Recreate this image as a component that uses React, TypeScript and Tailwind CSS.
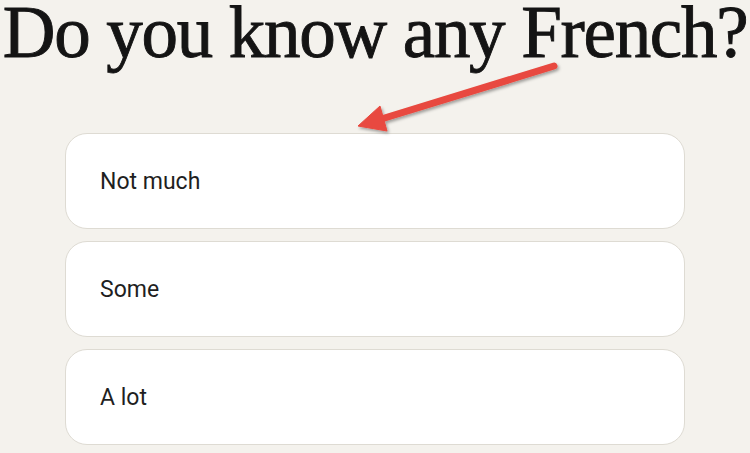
import React from 'react';

const options = ['Not much', 'Some', 'A lot'];

const App: React.FC = () => {
  return (
    <div className="relative h-[453px] w-[750px] overflow-hidden bg-[#f4f2ed]">
      {/* Question */}
      <h1 className="whitespace-nowrap text-center font-['Liberation_Serif',serif] text-[73px] leading-[66px] tracking-[-1.3px] text-[#141414] [-webkit-text-stroke:0.9px_#141414]">
        Do you know any French?
      </h1>

      {/* Answers */}
      <div className="mx-auto mt-[67px] flex w-[620px] flex-col gap-[12px]">
        {options.map((o) => (
          <button
            key={o}
            className="flex h-[96px] items-center rounded-[22px] border border-[#dedbd3] bg-white pl-[34px] pt-[3px] text-left font-['Roboto',sans-serif] text-[23px] text-[#1f1f1f]"
          >
            {o}
          </button>
        ))}
      </div>

      {/* Annotation arrow */}
      <svg className="pointer-events-none absolute left-0 top-0" width="750" height="453" viewBox="0 0 750 453">
        <defs>
          <filter id="sh" x="-20%" y="-20%" width="140%" height="140%">
            <feDropShadow dx="1.5" dy="2" stdDeviation="1.5" floodColor="#000" floodOpacity="0.35" />
          </filter>
        </defs>
        <g filter="url(#sh)" fill="#e8493f" stroke="#e8493f">
          <line x1="554" y1="66" x2="378" y2="120" strokeWidth="7" strokeLinecap="round" />
          <polygon points="358,126 380,106 387,131" strokeWidth="1" strokeLinejoin="round" />
        </g>
      </svg>
    </div>
  );
};

export default App;
